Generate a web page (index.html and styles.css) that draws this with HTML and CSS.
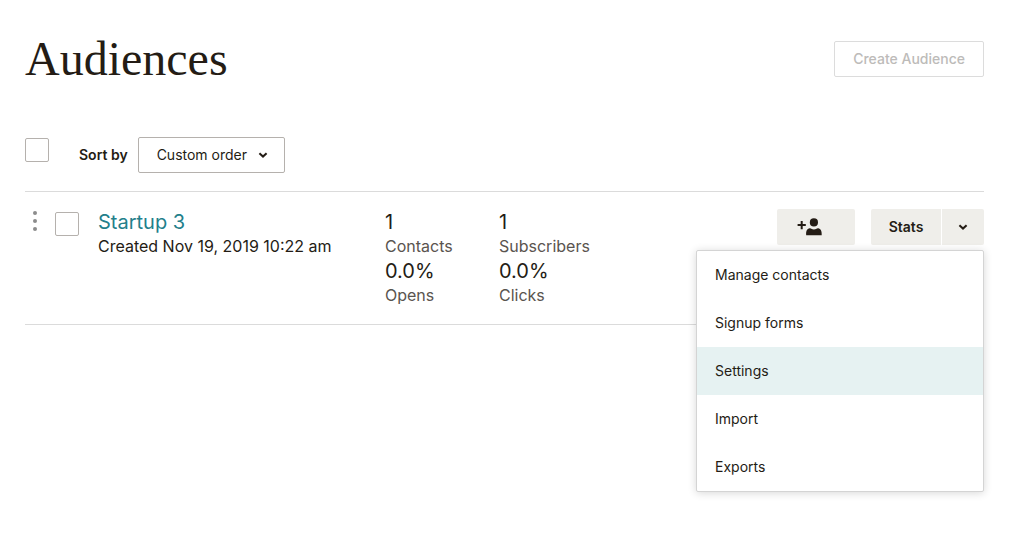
FILE: index.html
```html
<!DOCTYPE html>
<html lang="en">
<head>
<meta charset="utf-8">
<title>Audiences</title>
<link rel="stylesheet" href="styles.css">
</head>
<body>
<main class="page">
  <header class="header">
    <h1 class="title">Audiences</h1>
    <button class="create" type="button" disabled>Create Audience</button>
  </header>

  <div class="toolbar">
    <input class="check" type="checkbox" aria-label="Select all audiences">
    <label class="sort-label" for="sort">Sort by</label>
    <div class="select-wrap">
      <select class="select" id="sort">
        <option>Custom order</option>
      </select>
      <svg class="chevron select-chevron" viewBox="0 0 10 6" aria-hidden="true"><path d="M1.400 1.200 5 4.600 8.600 1.200"/></svg>
    </div>
  </div>

  <section class="audience">
    <svg class="handle" viewBox="0 0 20 20" aria-hidden="true"><circle cx="10" cy="2" r="2"/><circle cx="10" cy="10" r="2"/><circle cx="10" cy="18" r="2"/></svg>
    <input class="check row-check" type="checkbox" aria-label="Select Startup 3">
    <div class="info">
      <a class="name" href="#">Startup 3</a>
      <span class="created">Created Nov 19, 2019 10:22 am</span>
    </div>
    <div class="stats">
      <span class="value">1</span>
      <span class="caption">Contacts</span>
      <span class="value">0.0%</span>
      <span class="caption">Opens</span>
    </div>
    <div class="stats">
      <span class="value">1</span>
      <span class="caption">Subscribers</span>
      <span class="value">0.0%</span>
      <span class="caption">Clicks</span>
    </div>
    <div class="actions">
      <button class="button add" type="button" aria-label="Add contact">
        <svg class="add-icon" viewBox="0 0 25 18" aria-hidden="true">
          <path d="M3.700 3h2v3.100h3.100v2H5.700v3.100h-2V8.100H.6v-2h3.100z"/>
          <circle cx="16.900" cy="4.400" r="4.100"/>
          <path d="M9.200 17.200c-.3-4.400.8-6.500 3.500-7 .7-.1 1.100.1 1.600.5 1.500 1.100 3.700 1.100 5.200 0 .5-.4.900-.6 1.600-.5 2.700.5 3.800 2.600 3.600 7z"/>
        </svg>
      </button>
      <div class="split">
        <button class="button main" type="button">Stats</button>
        <button class="button toggle" type="button" aria-label="More actions" aria-expanded="true">
          <svg class="chevron" viewBox="0 0 10 6" aria-hidden="true"><path d="M1.400 1.200 5 4.600 8.600 1.200"/></svg>
        </button>
        <nav class="menu" aria-label="Audience actions">
          <a class="item" href="#">Manage contacts</a>
          <a class="item" href="#">Signup forms</a>
          <a class="item active" href="#">Settings</a>
          <a class="item" href="#">Import</a>
          <a class="item" href="#">Exports</a>
        </nav>
      </div>
    </div>
  </section>
</main>
</body>
</html>
```
FILE: styles.css
```css
* {
  box-sizing: border-box;
}

body {
  margin: 0;
  background: #fff;
  color: #241c15;
  font-family: Inter, "Liberation Sans", sans-serif;
  font-size: 14px;
}

button,
select {
  color: inherit;
  font: inherit;
}

.page {
  min-height: 100vh;
  padding: 32px 28px 32px 25px;
}

.header {
  display: flex;
  align-items: center;
  justify-content: space-between;
}

.title {
  margin: 0;
  font-family: "Liberation Serif", serif;
  font-size: 48px;
  font-weight: 400;
  line-height: 54px;
}

.create {
  height: 36px;
  padding: 0 18px 2px;
  border: 1px solid #dcdcdc;
  border-radius: 2px;
  background: #fff;
  color: #bdbbb9;
  font-weight: 500;
}

.toolbar {
  display: flex;
  align-items: center;
  margin-top: 51px;
  padding-bottom: 18px;
  border-bottom: 1px solid #dbdbdb;
}

.check {
  appearance: none;
  flex: none;
  width: 24px;
  height: 24px;
  margin: 0;
  border: 1px solid #b5b1ad;
  border-radius: 2px;
  background: #fff;
}

.toolbar .check {
  align-self: flex-start;
  margin-top: 1px;
}

.sort-label {
  margin: 0 10px 0 30px;
  padding-bottom: 2px;
  font-weight: 600;
}

.select-wrap {
  display: grid;
  align-items: center;
}

.select-wrap > * {
  grid-area: 1 / 1;
}

.select {
  appearance: none;
  height: 36px;
  padding: 0 36px 2px 18px;
  border: 1px solid #b5b1ad;
  border-radius: 2px;
  background: #fff;
}

.chevron {
  display: block;
  width: 10px;
  height: 6px;
  fill: none;
  stroke: #241c15;
  stroke-width: 2;
}

.select-chevron {
  justify-self: end;
  margin-right: 17px;
  pointer-events: none;
}

.audience {
  display: grid;
  grid-template-columns: 30px 43px 287fr 114fr 278fr auto;
  align-items: start;
  padding: 17px 0;
  border-bottom: 1px solid #dbdbdb;
}

.handle {
  width: 20px;
  height: 20px;
  margin-top: 2px;
  fill: #8c8c8c;
}

.row-check {
  margin-top: 3px;
}

.info,
.stats {
  display: flex;
  flex-direction: column;
  align-items: flex-start;
}

.name,
.value {
  font-size: 20px;
  line-height: 26px;
}

.name {
  color: #237f8b;
  text-decoration: none;
}

.created,
.caption {
  font-size: 16px;
  line-height: 23px;
}

.caption {
  color: #5a544f;
}

.actions {
  display: flex;
  gap: 16px;
}

.button {
  display: flex;
  align-items: center;
  justify-content: center;
  height: 36px;
  padding: 0;
  border: 0;
  background: #efeeea;
  font-weight: 600;
}

.add {
  justify-content: flex-start;
  width: 78px;
  padding-left: 20px;
  border-radius: 2px;
}

.add-icon {
  width: 25px;
  height: 18px;
  fill: #241c15;
}

.split {
  position: relative;
  display: flex;
  gap: 1px;
}

.main {
  width: 70px;
  padding-bottom: 2px;
  border-radius: 2px 0 0 2px;
}

.toggle {
  width: 42px;
  border-radius: 0 2px 2px 0;
}

.menu {
  position: absolute;
  top: 41px;
  right: 0;
  width: 288px;
  border: 1px solid #d4d4d4;
  border-radius: 2px;
  background: #fff;
  box-shadow: 0 1px 8px rgba(0, 0, 0, 0.16);
}

.item {
  display: block;
  padding: 0 18px;
  color: inherit;
  line-height: 48px;
  text-decoration: none;
}

.active {
  background: #e6f2f2;
}
```
